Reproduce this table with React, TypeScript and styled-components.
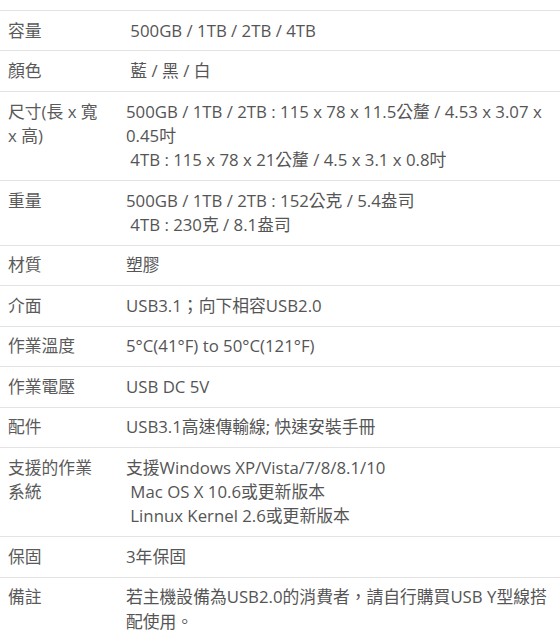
import React from "react";
import styled, { createGlobalStyle } from "styled-components";

const GlobalStyle = createGlobalStyle`
  html, body {
    margin: 0;
    padding: 0;
    background: #ffffff;
  }
  body {
    font-family: "Open Sans", "Noto Sans CJK TC", sans-serif;
    color: #555555;
  }
`;

const Page = styled.div`
  padding-top: 10px;
  width: 560px;
`;

const SpecTable = styled.table`
  width: 560px;
  border-collapse: collapse;
  font-size: 16.8px;
  line-height: 24.3px;
  color: #555555;
`;

const Row = styled.tr`
  border-top: 1px solid #e3e3e3;
`;

const Label = styled.td`
  width: 100px;
  padding: 7.6px 10px 7.6px 8px;
  vertical-align: top;
  text-align: left;
  color: #5a5a5a;
`;

const Value = styled.td`
  padding: 7.6px 3px 7.6px 8px;
  vertical-align: top;
  text-align: left;
  color: #555555;
`;

type Spec = { label: string; lines: string[] };

const NB = "\u00a0";

const specs: Spec[] = [
  { label: "容量", lines: [NB + "500GB / 1TB / 2TB / 4TB"] },
  { label: "顏色", lines: [NB + "藍 / 黑 / 白"] },
  {
    label: "尺寸(長 x 寬 x 高)",
    lines: [
      "500GB / 1TB / 2TB : 115 x 78 x 11.5公釐 / 4.53 x 3.07 x 0.45吋",
      NB + "4TB : 115 x 78 x 21公釐 / 4.5 x 3.1 x 0.8吋",
    ],
  },
  {
    label: "重量",
    lines: ["500GB / 1TB / 2TB : 152公克 / 5.4盎司", NB + "4TB : 230克 / 8.1盎司"],
  },
  { label: "材質", lines: ["塑膠"] },
  { label: "介面", lines: ["USB3.1；向下相容USB2.0"] },
  { label: "作業溫度", lines: ["5°C(41°F) to 50°C(121°F)"] },
  { label: "作業電壓", lines: ["USB DC 5V"] },
  { label: "配件", lines: ["USB3.1高速傳輸線; 快速安裝手冊"] },
  {
    label: "支援的作業系統",
    lines: [
      "支援Windows XP/Vista/7/8/8.1/10",
      NB + "Mac OS X 10.6或更新版本",
      NB + "Linnux Kernel 2.6或更新版本",
    ],
  },
  { label: "保固", lines: ["3年保固"] },
  { label: "備註", lines: ["若主機設備為USB2.0的消費者，請自行購買USB Y型線搭配使用。"] },
];

export default function App() {
  return (
    <>
      <GlobalStyle />
      <Page>
        <SpecTable>
          <tbody>
            {specs.map((s) => (
              <Row key={s.label}>
                <Label>{s.label}</Label>
                <Value>
                  {s.lines.map((l, i) => (
                    <React.Fragment key={i}>
                      {i > 0 && <br />}
                      {l}
                    </React.Fragment>
                  ))}
                </Value>
              </Row>
            ))}
          </tbody>
        </SpecTable>
      </Page>
    </>
  );
}
